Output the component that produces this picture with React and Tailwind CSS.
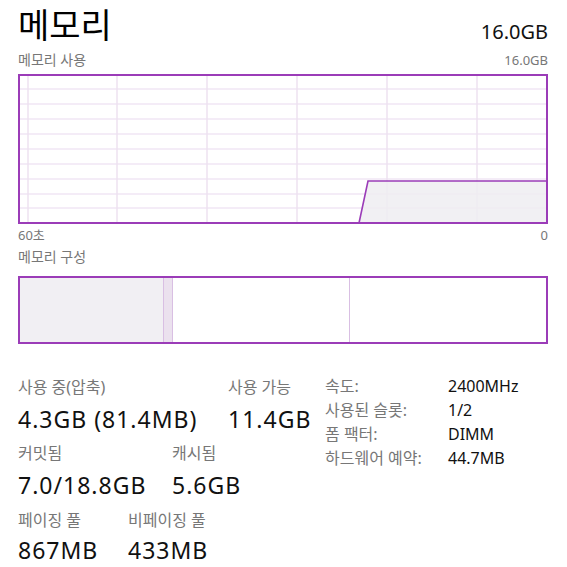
import React from "react";

const font = { fontFamily: '"Noto Sans", "Noto Sans CJK KR", sans-serif' };

function UsageChart() {
  const vx = [10, 99, 189, 279, 369, 459];
  const hy = [15, 30, 45, 60, 75, 90, 105, 120, 134];
  return (
    <svg width="530" height="150" viewBox="0 0 530 150" className="block">
      {hy.map((y) => (
        <line key={"h" + y} x1="1" x2="529" y1={y} y2={y} stroke="#f1e6f5" strokeWidth="1.5" />
      ))}
      {vx.map((x) => (
        <line key={"v" + x} x1={x} x2={x} y1="1" y2="149" stroke="#eee2f1" strokeWidth="1.5" />
      ))}
      <polygon points="341,149 350,107 529,107 529,149" fill="#efedf1" fillOpacity="0.85" />
      <polyline points="341,149 350,107 529,107" fill="none" stroke="#9b3cb8" strokeWidth="1.6" />
      <rect x="1" y="1" width="528" height="148" fill="none" stroke="#9b3cb8" strokeWidth="2" />
    </svg>
  );
}

function Composition() {
  return (
    <div className="flex h-[68px] w-[530px] border-2 border-[#9b3cb8]">
      <div className="w-[143px] bg-[#f1eff3]" />
      <div className="w-[10px] border-x border-[#d9bfe3] bg-[#ebe1ee]" />
      <div className="w-[177px] border-r border-[#d9bfe3]" />
      <div className="flex-1" />
    </div>
  );
}

function Stat({ label, value, className = "", gap = "mt-[9px]" }) {
  return (
    <div className={"flex flex-col " + className}>
      <div className="text-[16px] leading-[20px] text-[#777]">{label}</div>
      <div className={gap + " text-[23px] leading-[26px] tracking-[1px] text-[#111]"}>{value}</div>
    </div>
  );
}

export default function App() {
  const rows = [
    ["속도:", "2400MHz"],
    ["사용된 슬롯:", "1/2"],
    ["폼 팩터:", "DIMM"],
    ["하드웨어 예약:", "44.7MB"],
  ];
  return (
    <div style={font} className="h-[567px] w-[567px] bg-white pl-[18px] pr-[19px]">
      <div className="flex items-end justify-between pt-[3px]">
        <div className="text-[34px] leading-[44px] text-black">메모리</div>
        <div className="mb-[2px] text-[20px] leading-[26px] text-[#111]">16.0GB</div>
      </div>
      <div className="mt-[4px] flex justify-between text-[13px] leading-[18px] text-[#777]">
        <span className="text-[14px]">메모리 사용</span>
        <span>16.0GB</span>
      </div>
      <div className="mt-[5px]">
        <UsageChart />
      </div>
      <div className="mt-[2px] flex justify-between text-[13px] leading-[18px] text-[#777]">
        <span>60초</span>
        <span>0</span>
      </div>
      <div className="mt-[4px] text-[14px] leading-[18px] text-[#777]">메모리 구성</div>
      <div className="mt-[10px]">
        <Composition />
      </div>
      <div className="mt-[33px] flex">
        <div className="flex w-[307px] flex-col">
          <div className="flex">
            <Stat label="사용 중(압축)" value="4.3GB (81.4MB)" className="w-[210px]" />
            <Stat label="사용 가능" value="11.4GB" />
          </div>
          <div className="mt-[11px] flex">
            <Stat label="커밋됨" value="7.0/18.8GB" className="w-[154px]" />
            <Stat label="캐시됨" value="5.6GB" />
          </div>
          <div className="mt-[12px] flex">
            <Stat label="페이징 풀" value="867MB" className="w-[110px]" gap="mt-[7px]" />
            <Stat label="비페이징 풀" value="433MB" gap="mt-[7px]" />
          </div>
        </div>
        <div className="-mt-[3px] flex flex-col">
          {rows.map(([k, v]) => (
            <div key={k} className="flex h-[24px] items-center text-[16px]">
              <span className="w-[123px] text-[#777]">{k}</span>
              <span className="text-[#111]">{v}</span>
            </div>
          ))}
        </div>
      </div>
    </div>
  );
}
